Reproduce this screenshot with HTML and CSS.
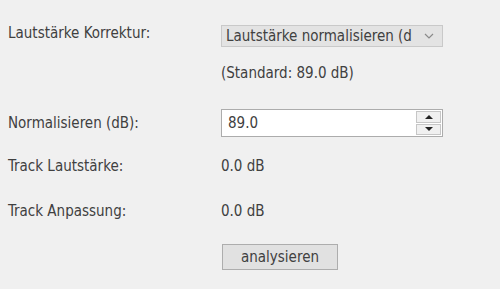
FILE: index.html
```html
<!DOCTYPE html>
<html lang="de">
<head>
<meta charset="utf-8">
<title>Lautstärke</title>
<link rel="stylesheet" href="styles.css">
</head>
<body>
<div class="form">
  <div class="row row-top">
    <div class="label">Lautstärke Korrektur:</div>
    <div class="select">
      <span class="select-text">Lautstärke normalisieren (d</span>
      <svg class="chev" width="10" height="6" viewBox="0 0 10 6"><path d="M1 1 L5 5 L9 1" fill="none" stroke="#8a8a8a" stroke-width="1.2"/></svg>
    </div>
  </div>
  <div class="row row-std">
    <div class="label"></div>
    <div class="value">(Standard: 89.0 dB)</div>
  </div>
  <div class="row row-spin">
    <div class="label">Normalisieren (dB):</div>
    <div class="spin">
      <span class="spin-text">89.0</span>
      <div class="spin-btns">
        <div class="spin-btn"><svg width="8" height="4" viewBox="0 0 8 4"><path d="M0 4 L4 0 L8 4 Z" fill="#222"/></svg></div>
        <div class="spin-btn"><svg width="8" height="4" viewBox="0 0 8 4"><path d="M0 0 L4 4 L8 0 Z" fill="#222"/></svg></div>
      </div>
    </div>
  </div>
  <div class="row row-track1">
    <div class="label">Track Lautstärke:</div>
    <div class="value">0.0 dB</div>
  </div>
  <div class="row row-track2">
    <div class="label">Track Anpassung:</div>
    <div class="value">0.0 dB</div>
  </div>
  <div class="row row-btn">
    <div class="label"></div>
    <div class="button">analysieren</div>
  </div>
</div>
</body>
</html>
```
FILE: styles.css
```css
html, body {
  margin: 0;
  padding: 0;
  background: #f0f0f0;
}
body {
  width: 500px;
  height: 289px;
  overflow: hidden;
  font-family: "DejaVu Sans Condensed", "DejaVu Sans", sans-serif;
  font-stretch: condensed;
  font-size: 15px;
  color: #404040;
}
.form {
  padding: 25px 0 0 8px;
}
.row {
  display: flex;
  align-items: center;
}
.row-top { align-items: flex-start; }
.label {
  width: 213px;
  flex: none;
  line-height: 17px;
  white-space: nowrap;
}
.value {
  line-height: 17px;
  white-space: nowrap;
}
.select {
  box-sizing: border-box;
  width: 222px;
  height: 22px;
  background: #e3e3e3;
  border: 1px solid #c9c9c9;
  display: flex;
  align-items: center;
  padding-left: 4px;
  padding-right: 8px;
}
.select-text {
  flex: 1;
  overflow: hidden;
  white-space: nowrap;
  line-height: 18px;
}
.chev { flex: none; margin-left: 6px; }
.row-std { margin-top: 18px; }
.row-spin { margin-top: 27px; }
.spin {
  box-sizing: border-box;
  width: 222px;
  height: 28px;
  background: #fff;
  border: 1px solid #acacac;
  display: flex;
  align-items: stretch;
}
.spin-text {
  flex: 1;
  padding-left: 6px;
  line-height: 26px;
}
.spin-btns {
  width: 25px;
  display: flex;
  flex-direction: column;
  padding: 1px;
  gap: 1px;
  background: #fff;
}
.spin-btn {
  flex: 1;
  background: #f0f0f0;
  border: 1px solid #c6c6c6;
  display: flex;
  align-items: center;
  justify-content: center;
}
.spin-btn svg { display: block; }
.row-track1 { margin-top: 21px; }
.row-track2 { margin-top: 28px; }
.row-btn { margin-top: 24px; }
.button {
  box-sizing: border-box;
  width: 116px;
  height: 26px;
  margin-left: 1px;
  background: #e1e1e1;
  border: 1px solid #adadad;
  display: flex;
  align-items: center;
  justify-content: center;
  line-height: 18px;
}
```
